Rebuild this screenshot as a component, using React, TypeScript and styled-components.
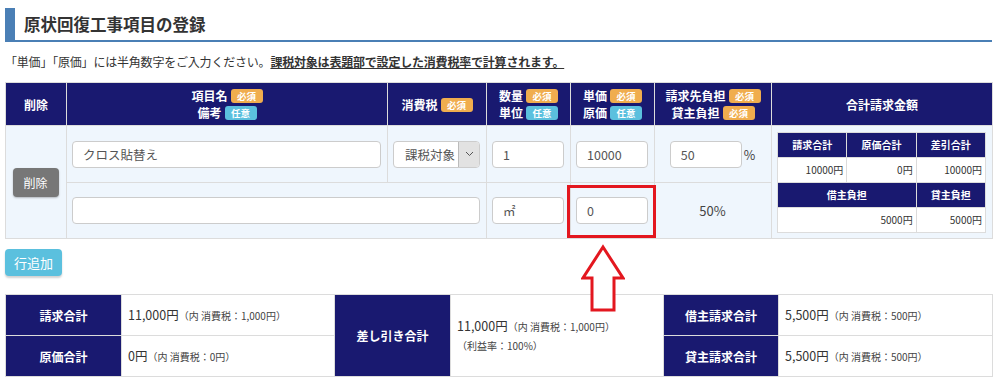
import React from 'react';
import styled, { createGlobalStyle } from 'styled-components';

const GlobalStyle = createGlobalStyle`
  html, body {
    margin: 0;
    padding: 0;
    background: #fff;
    overflow: hidden;
  }
  body {
    font-family: "Noto Sans CJK JP", "Liberation Sans", sans-serif;
    color: #333;
  }
`;

const NAVY = '#191970';
const LINE = '#dcdcdc';

const Page = styled.div`
  position: relative;
  width: 987px;
  padding: 8px 0 0 5px;
`;

const Heading = styled.h2`
  margin: 0;
  height: 32px;
  line-height: 32px;
  padding-left: 9px;
  border-left: 10px solid #4a7fb5;
  border-bottom: 2px solid #4a7fb5;
  font-size: 16.5px;
  font-weight: bold;
  color: #333;
`;

const Note = styled.p`
  margin: 11px 0 11px;
  font-size: 12px;
  line-height: 18px;
  letter-spacing: -0.2px;
  color: #333;

  strong {
    text-decoration: underline;
  }
`;

const Grid = styled.table`
  width: 987px;
  table-layout: fixed;
  border-collapse: collapse;
  border: 1px solid ${LINE};
`;

const Th = styled.th`
  background: ${NAVY};
  color: #fff;
  font-size: 12px;
  font-weight: bold;
  height: 42px;
  padding: 0;
  border: 1px solid ${LINE};
  text-align: center;
  vertical-align: middle;
`;

const HeadLine = styled.div`
  line-height: 17px;
  white-space: nowrap;
`;

const Badge = styled.span<{ $kind: 'req' | 'opt' }>`
  display: inline-block;
  width: 32px;
  height: 14px;
  line-height: 14px;
  margin-left: 3px;
  border-radius: 3px;
  font-size: 9.5px;
  font-weight: bold;
  color: #fff;
  vertical-align: 1px;
  background: ${(p) => (p.$kind === 'req' ? '#f0ad4e' : '#5bc0de')};
`;

const Row = styled.tr<{ $h: number }>`
  height: ${(p) => p.$h}px;
  background: #eff6fd;
`;

const Td = styled.td<{ $align?: string }>`
  border: 1px solid ${LINE};
  padding: 0 6px 0 5px;
  vertical-align: middle;
  text-align: ${(p) => p.$align || 'left'};
  font-size: 13px;
  color: #444;
`;

const Field = styled.input<{ $w?: number }>`
  box-sizing: border-box;
  width: ${(p) => (p.$w ? `${p.$w}px` : '100%')};
  height: 27px;
  padding: 0 10px;
  border: 1px solid #ccc;
  border-radius: 4px;
  background: #fff;
  font-family: inherit;
  font-size: 12.5px;
  color: #555;
  outline: none;
`;

const Percent = styled.span`
  font-size: 12.5px;
  margin-left: 2px;
`;

const SelectBox = styled.div`
  box-sizing: border-box;
  display: flex;
  height: 27px;
  border: 1px solid #ccc;
  border-radius: 4px;
  background: #fff;
  overflow: hidden;
`;

const SelectText = styled.span`
  flex: 1;
  text-align: right;
  padding-right: 3px;
  font-size: 12.5px;
  line-height: 25px;
  color: #555;
`;

const SelectArrow = styled.span`
  width: 20px;
  display: flex;
  align-items: center;
  justify-content: center;
  background: #e2e2e2;
  border-left: 1px solid #bbb;
`;

const DeleteButton = styled.button`
  width: 46px;
  height: 29px;
  border: none;
  border-radius: 4px;
  background: #777;
  color: #fff;
  font-family: inherit;
  font-size: 12px;
  padding: 0;
  box-shadow: 0 1px 2px rgba(0, 0, 0, 0.25);
`;

const Summary = styled.table`
  width: 100%;
  table-layout: fixed;
  border-collapse: collapse;
  background: #fff;
  border: 1px solid ${LINE};
`;

const SumTh = styled.th`
  background: ${NAVY};
  color: #fff;
  font-size: 10px;
  font-weight: bold;
  height: 24px;
  padding: 0;
  border: 1px solid ${LINE};
  text-align: center;
`;

const SumTd = styled.td`
  height: 24px;
  padding: 0 3px;
  border: 1px solid ${LINE};
  text-align: right;
  font-size: 10px;
  color: #333;
`;

const AddButton = styled.button`
  display: block;
  margin: 10px 0 18px;
  width: 57px;
  height: 27px;
  border: none;
  border-radius: 4px;
  background: #5bc0de;
  color: #fff;
  font-family: inherit;
  font-size: 13px;
  padding: 0;
  box-shadow: 0 2px 2px rgba(0, 0, 0, 0.18);
`;

const Totals = styled.table`
  width: 987px;
  table-layout: fixed;
  border-collapse: collapse;
  border: 1px solid ${LINE};
`;

const TotTh = styled.th`
  background: ${NAVY};
  color: #fff;
  font-size: 12px;
  font-weight: bold;
  height: 40px;
  padding: 0;
  border: 1px solid ${LINE};
  text-align: center;
`;

const TotTd = styled.td`
  border: 1px solid ${LINE};
  padding: 0 6px;
  font-size: 12.5px;
  color: #333;
  line-height: 18px;
`;

const Small = styled.span`
  font-size: 10px;
  color: #444;
`;

const Mark = styled.div`
  position: absolute;
  left: 567px;
  top: 185px;
  width: 89px;
  height: 53px;
  box-sizing: border-box;
  border: 3px solid #e3171f;
  pointer-events: none;
`;

const ArrowSvg = styled.svg`
  position: absolute;
  left: 581px;
  top: 244px;
`;

const Chevron = () => (
  <svg width="9" height="6" viewBox="0 0 9 6">
    <path d="M1 1 L4.5 4.5 L8 1" fill="none" stroke="#555" strokeWidth="1" />
  </svg>
);

const App: React.FC = () => {
  return (
    <Page>
      <GlobalStyle />
      <Heading>原状回復工事項目の登録</Heading>
      <Note>
        「単価」「原価」には半角数字をご入力ください。
        <strong>課税対象は表題部で設定した消費税率で計算されます。</strong>
      </Note>

      <Grid>
        <colgroup>
          <col style={{ width: 61 }} />
          <col style={{ width: 321 }} />
          <col style={{ width: 99 }} />
          <col style={{ width: 84 }} />
          <col style={{ width: 84 }} />
          <col style={{ width: 117 }} />
          <col style={{ width: 221 }} />
        </colgroup>
        <thead>
          <tr>
            <Th>削除</Th>
            <Th>
              <HeadLine>項目名<Badge $kind="req">必須</Badge></HeadLine>
              <HeadLine>備考<Badge $kind="opt">任意</Badge></HeadLine>
            </Th>
            <Th>
              <HeadLine>消費税<Badge $kind="req">必須</Badge></HeadLine>
            </Th>
            <Th>
              <HeadLine>数量<Badge $kind="req">必須</Badge></HeadLine>
              <HeadLine>単位<Badge $kind="opt">任意</Badge></HeadLine>
            </Th>
            <Th>
              <HeadLine>単価<Badge $kind="req">必須</Badge></HeadLine>
              <HeadLine>原価<Badge $kind="opt">任意</Badge></HeadLine>
            </Th>
            <Th>
              <HeadLine>請求先負担<Badge $kind="req">必須</Badge></HeadLine>
              <HeadLine>貸主負担<Badge $kind="req">必須</Badge></HeadLine>
            </Th>
            <Th>合計請求金額</Th>
          </tr>
        </thead>
        <tbody>
          <Row $h={57}>
            <Td rowSpan={2} $align="center">
              <DeleteButton>削除</DeleteButton>
            </Td>
            <Td>
              <Field defaultValue="クロス貼替え" />
            </Td>
            <Td>
              <SelectBox>
                <SelectText>課税対象</SelectText>
                <SelectArrow>
                  <Chevron />
                </SelectArrow>
              </SelectBox>
            </Td>
            <Td>
              <Field defaultValue="1" />
            </Td>
            <Td>
              <Field defaultValue="10000" />
            </Td>
            <Td $align="center">
              <Field $w={72} defaultValue="50" />
              <Percent>%</Percent>
            </Td>
            <Td rowSpan={2}>
              <Summary>
                <tbody>
                  <tr>
                    <SumTh>請求合計</SumTh>
                    <SumTh>原価合計</SumTh>
                    <SumTh>差引合計</SumTh>
                  </tr>
                  <tr>
                    <SumTd>10000円</SumTd>
                    <SumTd>0円</SumTd>
                    <SumTd>10000円</SumTd>
                  </tr>
                  <tr>
                    <SumTh colSpan={2}>借主負担</SumTh>
                    <SumTh>貸主負担</SumTh>
                  </tr>
                  <tr>
                    <SumTd colSpan={2}>5000円</SumTd>
                    <SumTd>5000円</SumTd>
                  </tr>
                </tbody>
              </Summary>
            </Td>
          </Row>
          <Row $h={56}>
            <Td colSpan={2}>
              <Field defaultValue="" />
            </Td>
            <Td>
              <Field defaultValue="㎡" />
            </Td>
            <Td>
              <Field defaultValue="0" />
            </Td>
            <Td $align="center">50%</Td>
          </Row>
        </tbody>
      </Grid>

      <AddButton>行追加</AddButton>

      <Totals>
        <colgroup>
          <col style={{ width: 116 }} />
          <col style={{ width: 213 }} />
          <col style={{ width: 116 }} />
          <col style={{ width: 213 }} />
          <col style={{ width: 115 }} />
          <col style={{ width: 214 }} />
        </colgroup>
        <tbody>
          <tr>
            <TotTh>請求合計</TotTh>
            <TotTd>
              11,000円<Small>（内 消費税：1,000円）</Small>
            </TotTd>
            <TotTh rowSpan={2}>差し引き合計</TotTh>
            <TotTd rowSpan={2}>
              <div>
                11,000円<Small>（内 消費税：1,000円）</Small>
              </div>
              <div>
                <Small>（利益率：100%）</Small>
              </div>
            </TotTd>
            <TotTh>借主請求合計</TotTh>
            <TotTd>
              5,500円<Small>（内 消費税：500円）</Small>
            </TotTd>
          </tr>
          <tr>
            <TotTh>原価合計</TotTh>
            <TotTd>
              0円<Small>（内 消費税：0円）</Small>
            </TotTd>
            <TotTh>貸主請求合計</TotTh>
            <TotTd>
              5,500円<Small>（内 消費税：500円）</Small>
            </TotTd>
          </tr>
        </tbody>
      </Totals>

      <Mark />
      <ArrowSvg width="44" height="70" viewBox="0 0 44 70">
        <path
          d="M22 3 L42 34 L33 34 L33 66 L11 66 L11 34 L2 34 Z"
          fill="#fff"
          stroke="#e3171f"
          strokeWidth="3"
          strokeLinejoin="miter"
        />
      </ArrowSvg>
    </Page>
  );
};

export default App;
